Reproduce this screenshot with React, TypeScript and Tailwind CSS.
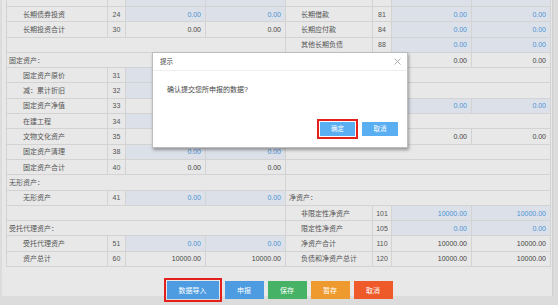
import React from 'react'

type Side =
  | { kind: 'item'; label: string; no: string; a: string; b: string; input: boolean }
  | { kind: 'head'; label: string }
  | { kind: 'blank' }

const rows: [Side, Side][] = [
  [{ kind: 'item', label: '', no: '', a: '', b: '', input: true }, { kind: 'item', label: '', no: '', a: '', b: '', input: true }],
  [{ kind: 'item', label: '长期债券投资', no: '24', a: '0.00', b: '0.00', input: true }, { kind: 'item', label: '长期借款', no: '81', a: '0.00', b: '0.00', input: true }],
  [{ kind: 'item', label: '长期投资合计', no: '30', a: '0.00', b: '0.00', input: false }, { kind: 'item', label: '长期应付款', no: '84', a: '0.00', b: '0.00', input: true }],
  [{ kind: 'blank' }, { kind: 'item', label: '其他长期负债', no: '88', a: '0.00', b: '0.00', input: true }],
  [{ kind: 'head', label: '固定资产：' }, { kind: 'item', label: '长期负债合计', no: '90', a: '0.00', b: '0.00', input: false }],
  [{ kind: 'item', label: '固定资产原价', no: '31', a: '0.00', b: '0.00', input: true }, { kind: 'blank' }],
  [{ kind: 'item', label: '减：累计折旧', no: '32', a: '0.00', b: '0.00', input: true }, { kind: 'head', label: '受托代理负债：' }],
  [{ kind: 'item', label: '固定资产净值', no: '33', a: '0.00', b: '0.00', input: false }, { kind: 'item', label: '受托代理负债', no: '91', a: '0.00', b: '0.00', input: true }],
  [{ kind: 'item', label: '在建工程', no: '34', a: '0.00', b: '0.00', input: true }, { kind: 'blank' }],
  [{ kind: 'item', label: '文物文化资产', no: '35', a: '0.00', b: '0.00', input: false }, { kind: 'item', label: '负债合计', no: '100', a: '0.00', b: '0.00', input: false }],
  [{ kind: 'item', label: '固定资产清理', no: '38', a: '0.00', b: '0.00', input: true }, { kind: 'blank' }],
  [{ kind: 'item', label: '固定资产合计', no: '40', a: '0.00', b: '0.00', input: false }, { kind: 'blank' }],
  [{ kind: 'head', label: '无形资产：' }, { kind: 'blank' }],
  [{ kind: 'item', label: '无形资产', no: '41', a: '0.00', b: '0.00', input: true }, { kind: 'head', label: '净资产：' }],
  [{ kind: 'blank' }, { kind: 'item', label: '非限定性净资产', no: '101', a: '10000.00', b: '10000.00', input: true }],
  [{ kind: 'head', label: '受托代理资产：' }, { kind: 'item', label: '限定性净资产', no: '105', a: '0.00', b: '0.00', input: true }],
  [{ kind: 'item', label: '受托代理资产', no: '51', a: '0.00', b: '0.00', input: true }, { kind: 'item', label: '净资产合计', no: '110', a: '10000.00', b: '10000.00', input: false }],
  [{ kind: 'item', label: '资产总计', no: '60', a: '10000.00', b: '10000.00', input: false }, { kind: 'item', label: '负债和净资产总计', no: '120', a: '10000.00', b: '10000.00', input: false }],
]

const td = 'border border-[#d3d3d3] h-[15.3px] p-0 leading-none'

function Cells({ side, right }: { side: Side; right?: boolean }) {
  if (side.kind === 'blank') return <td colSpan={4} className={td} />
  if (side.kind === 'head')
    return (
      <td colSpan={4} className={`${td} ${right ? 'pl-[3px]' : 'pl-[2px]'} text-[#555]`}>
        {side.label}
      </td>
    )
  const val = side.input ? 'bg-[#dce1e9] text-[#4a92d6]' : 'text-[#444]'
  return (
    <>
      <td className={`${td} ${right ? 'pl-[15px]' : 'pl-[16px]'} text-[#555] whitespace-nowrap`}>{side.label}</td>
      <td className={`${td} text-center text-[#555]`}>{side.no}</td>
      <td className={`${td} ${val} text-right pr-[4px]`}>{side.a}</td>
      <td className={`${td} ${val} text-right pr-[4px]`}>{side.b}</td>
    </>
  )
}

function Btn({ children, color, wide }: { children: React.ReactNode; color: string; wide?: boolean }) {
  return (
    <button className={`${color} ${wide ? 'w-[52px]' : 'w-[39px]'} h-[18px] text-white text-[7px] leading-none`}>
      {children}
    </button>
  )
}

export default function App() {
  return (
    <div
      className="relative w-[558px] h-[305px] overflow-hidden bg-[#dcdcdc]"
      style={{ fontFamily: '"Liberation Sans", "Noto Sans CJK SC", sans-serif' }}
    >
      <div className="ml-[2px] w-[551px] h-full bg-[#e8e8e8] border-r border-[#cfcfcf]">
        <table className="-mt-[9.3px] ml-[4px] table-fixed border-collapse text-[7px] w-[544px]">
          <colgroup>
            <col className="w-[101px]" />
            <col className="w-[18px]" />
            <col className="w-[80px]" />
            <col className="w-[80px]" />
            <col className="w-[87px]" />
            <col className="w-[19px]" />
            <col className="w-[80px]" />
            <col className="w-[79px]" />
          </colgroup>
          <tbody>
            {rows.map(([l, r], i) => (
              <tr key={i}>
                <Cells side={l} />
                <Cells side={r} right />
              </tr>
            ))}
          </tbody>
        </table>

        <div className="flex justify-center items-center gap-[4px] mt-[11px] ml-[2px]">
          <span className="border-2 border-[#e4201c] p-[1px] flex -mr-[1px]">
            <Btn color="bg-[#4d9be0]" wide>数据导入</Btn>
          </span>
          <Btn color="bg-[#4d9be0]">申报</Btn>
          <Btn color="bg-[#46b266]">保存</Btn>
          <Btn color="bg-[#ee9a2e]">暂存</Btn>
          <Btn color="bg-[#ee5a2a]">取消</Btn>
        </div>
      </div>

      {/* 提示 dialog */}
      <div className="absolute left-[152px] top-[52px] w-[256px] h-[96px] bg-white border border-[#bdbdbd] shadow-[1px_2px_3px_rgba(0,0,0,0.35)] flex flex-col">
        <div className="h-[18px] flex items-center justify-between px-[7px] border-b border-[#eeeeee]">
          <span className="text-[6.5px] text-[#444]">提示</span>
          <svg width="7" height="7" viewBox="0 0 7 7" className="mr-[-1px]">
            <path d="M0.5 0.5L6.5 6.5M6.5 0.5L0.5 6.5" stroke="#999" strokeWidth="0.8" />
          </svg>
        </div>
        <div className="pl-[14px] pt-[14px] text-[7px] text-[#444]">确认提交您所申报的数据?</div>
        <div className="mt-auto mb-[8px] flex justify-end items-center gap-[4px] pr-[9px]">
          <span className="border-2 border-[#e4201c] p-[1px] flex">
            <button className="w-[35px] h-[14px] bg-[#5aaef2] text-white text-[6.5px] leading-none">确定</button>
          </span>
          <button className="w-[36px] h-[14px] bg-[#5aaef2] text-white text-[6.5px] leading-none">取消</button>
        </div>
      </div>
    </div>
  )
}
